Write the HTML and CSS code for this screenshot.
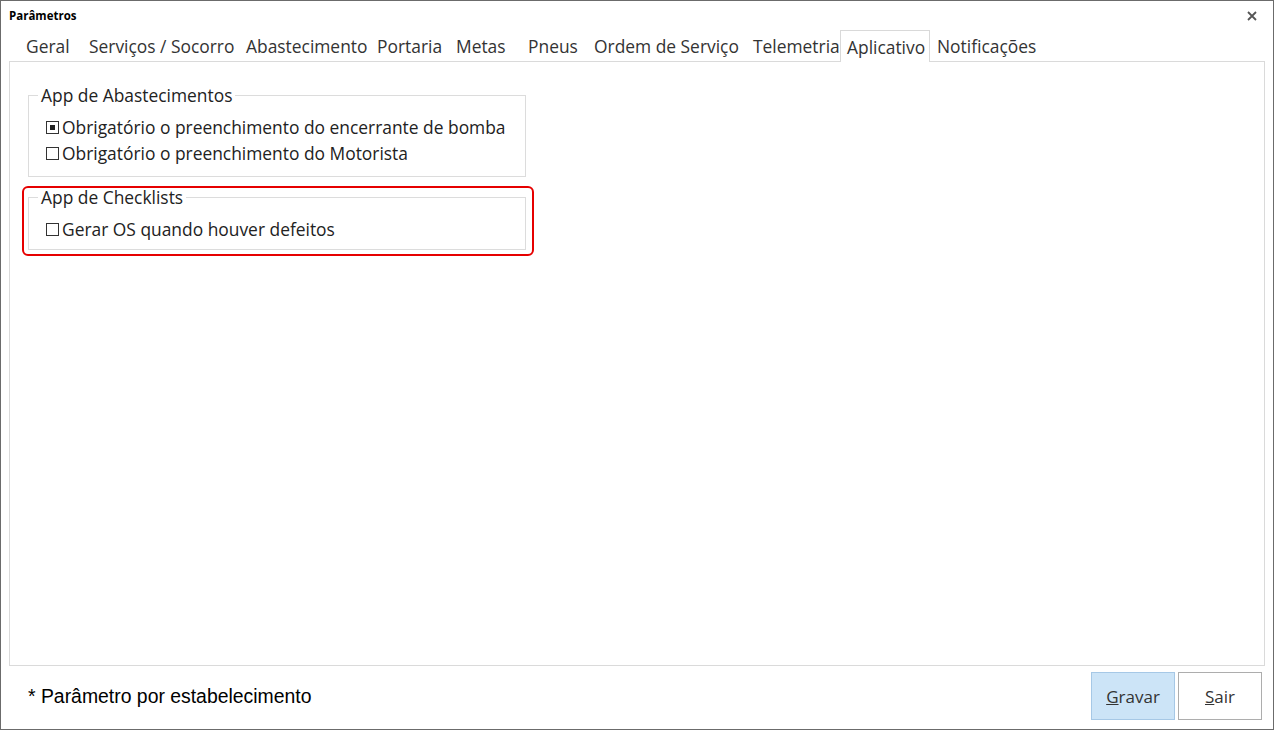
FILE: index.html
```html
<!DOCTYPE html>
<html lang="pt-BR">

<head>
  <meta charset="UTF-8" />
  <title>Parâmetros</title>
  <link rel="stylesheet" href="styles.css">
</head>

<body>
  <div class="window">
    <div class="titlebar">
      <span class="title">Parâmetros</span>
      <svg class="close" width="10" height="10" viewBox="0 0 10 10">
        <path d="M1 1 L9 9 M9 1 L1 9" stroke="#555" stroke-width="1.8" fill="none" />
      </svg>
    </div>

    <div class="tabs">
      <div class="tab tab-geral">Geral</div>
      <div class="tab tab-servicos">Serviços / Socorro</div>
      <div class="tab tab-abast">Abastecimento</div>
      <div class="tab tab-portaria">Portaria</div>
      <div class="tab tab-metas">Metas</div>
      <div class="tab tab-pneus">Pneus</div>
      <div class="tab tab-ordem">Ordem de Serviço</div>
      <div class="tab tab-tele">Telemetria</div>
      <div class="tab tab-aplic active">Aplicativo</div>
      <div class="tab">Notificações</div>
    </div>

    <div class="panel">
      <fieldset class="group">
        <legend>App de Abastecimentos</legend>
        <div class="check-row"><span class="box checked"></span>Obrigatório o preenchimento do encerrante de bomba</div>
        <div class="check-row"><span class="box"></span>Obrigatório o preenchimento do Motorista</div>
      </fieldset>

      <div class="highlight">
        <fieldset class="group group-small">
          <legend>App de Checklists</legend>
          <div class="check-row"><span class="box"></span>Gerar OS quando houver defeitos</div>
        </fieldset>
      </div>
    </div>

    <div class="footer">
      <span class="note">* Parâmetro por estabelecimento</span>
      <div class="buttons">
        <button class="btn btn-primary"><u>G</u>ravar</button>
        <button class="btn"><u>S</u>air</button>
      </div>
    </div>
  </div>
</body>

</html>
```

FILE: styles.css
```css
body {
  margin: 0;
  background-color: #fff;
  font-family: "Open Sans", "Noto Sans", sans-serif;
}

.window {
  width: 1274px;
  height: 730px;
  border: 1px solid #6b6b6b;
  box-sizing: border-box;
  background-color: #fff;
  display: flex;
  flex-direction: column;
}

.titlebar {
  height: 29px;
  display: flex;
  align-items: center;
  justify-content: space-between;
  padding: 0 16px 0 8px;
}

.title {
  font-size: 11.5px;
  font-weight: bold;
  color: #000;
}

.tabs {
  display: flex;
  height: 31px;
  margin: 0 8px;
  padding-left: 10px;
}

.tab {
  height: 31px;
  line-height: 33px;
  padding-left: 7px;
  box-sizing: border-box;
  font-size: 17.4px;
  color: #333;
  white-space: nowrap;
}

.tab-geral { width: 63px; }
.tab-servicos { width: 157px; }
.tab-abast { width: 131px; }
.tab-portaria { width: 79px; }
.tab-metas { width: 72px; }
.tab-pneus { width: 66px; }
.tab-ordem { width: 159px; }
.tab-tele { width: 94px; }
.tab-aplic { width: 90px; }

.tab.active {
  height: 32px;
  line-height: 32px;
  padding-left: 6px;
  border: 1px solid #d9d9d9;
  border-bottom: 0;
  background-color: #fff;
  position: relative;
}

.panel {
  height: 605px;
  margin: 0 8px;
  border: 1px solid #dadada;
  box-sizing: border-box;
  padding: 22px 0 0 12px;
}

.group {
  width: 498px;
  margin: 0 0 0 6px;
  padding: 8px 0 10px 0;
  border: 1px solid #dcdcdc;
  box-sizing: border-box;
}

.group legend {
  margin-left: 9px;
  padding: 0 3px;
  font-size: 17.4px;
  line-height: 22px;
  color: #222;
}

.group-small {
  width: auto;
  margin: 0;
  padding: 10px 0 7px 0;
}

.group-small legend {
  line-height: 18px;
}

.check-row {
  height: 26px;
  display: flex;
  align-items: center;
  padding-left: 17px;
  font-size: 17.4px;
  color: #222;
}

.box {
  width: 13px;
  height: 13px;
  border: 1px solid #333;
  box-sizing: border-box;
  margin-right: 3px;
  background-color: #fff;
}

.box.checked {
  background-color: #222;
  box-shadow: inset 0 0 0 3px #fff;
}

.highlight {
  width: 512px;
  margin-top: 9px;
  border: 2px solid #e60000;
  border-radius: 6px;
  padding: 0 6px 4px 4px;
  box-sizing: border-box;
}

.footer {
  flex: 1;
  display: flex;
  align-items: center;
  justify-content: space-between;
  padding: 0 11px 3px 27px;
}

.note {
  font-family: "Liberation Sans", Arial, sans-serif;
  font-size: 19.4px;
  color: #000;
}

.buttons {
  display: flex;
  gap: 3px;
}

.btn {
  width: 84px;
  height: 48px;
  border: 1px solid #adadad;
  background-color: #fff;
  font-family: "Open Sans", "Noto Sans", sans-serif;
  font-size: 17px;
  color: #333;
  padding: 0;
}

.btn-primary {
  background-color: #cce4f7;
  border-color: #a6c8e6;
}
```
